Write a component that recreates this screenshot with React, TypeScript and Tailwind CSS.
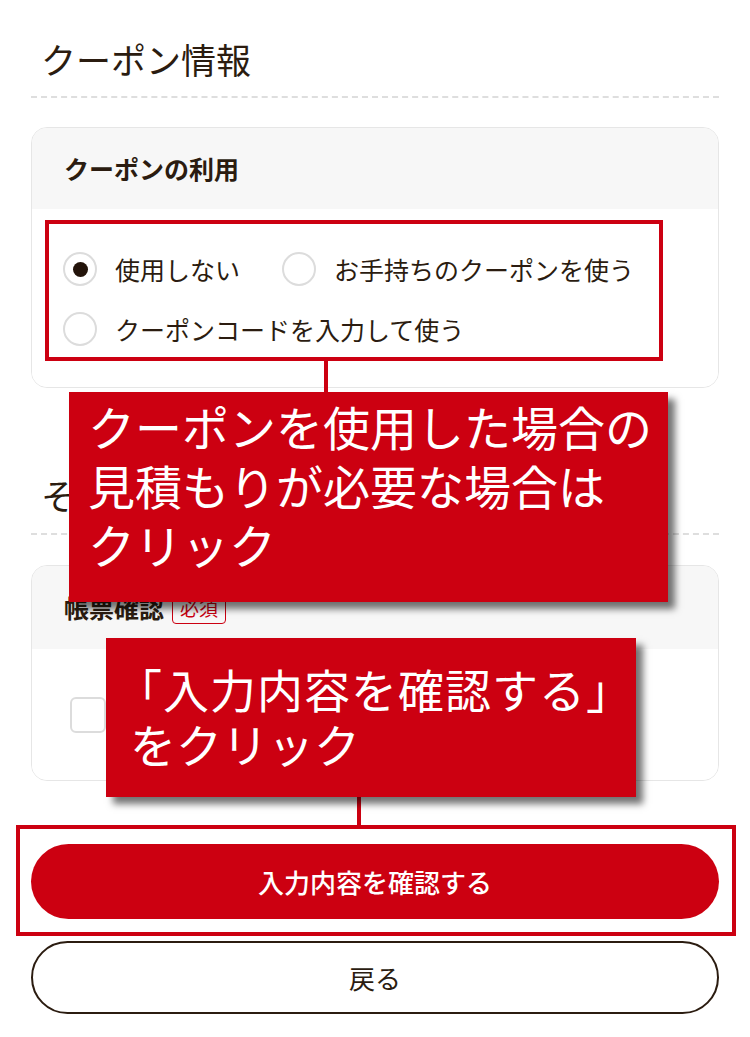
import React from "react";

function Radio({ checked, label }: { checked?: boolean; label: string }) {
  return (
    <label className="flex items-center gap-[18px]">
      <span className="flex h-[34px] w-[34px] shrink-0 items-center justify-center rounded-full border-2 border-[#dcdcdc] bg-white">
        {checked && <span className="h-[15px] w-[15px] rounded-full bg-[#23140a]" />}
      </span>
      <span className="text-[25px] leading-[32px] text-[#2b1c10]">{label}</span>
    </label>
  );
}

function Callout({ lines, className }: { lines: React.ReactNode[]; className: string }) {
  return (
    <div
      className={`absolute bg-[#cc0011] text-white shadow-[7px_7px_7px_rgba(0,0,0,0.55)] ${className}`}
    >
      {lines.map((l, i) => (
        <div key={i}>{l}</div>
      ))}
    </div>
  );
}

export default function App() {
  return (
    <div
      className="relative h-[1037px] w-[750px] overflow-hidden bg-white"
      style={{ fontFamily: '"Noto Sans CJK JP", "Noto Sans", sans-serif' }}
    >
      <div className="px-[31px]">
        {/* クーポン情報 */}
        <h2 className="pl-[10px] pt-[36px] text-[35px] leading-[46px] font-normal text-[#2b1c10]">
          クーポン情報
        </h2>
        <div className="mt-[14px] border-t-2 border-dashed border-[#dedede]" />

        <div className="mt-[29px] overflow-hidden rounded-[16px] border border-[#e6e6e6]">
          <div className="flex h-[81px] items-center bg-[#f7f7f7] px-[32px] text-[25px] font-bold text-[#2b1c10]">
            クーポンの利用
          </div>
          <div className="flex flex-col gap-[26px] bg-white px-[31px] pb-[41px] pt-[43px]">
            <div className="flex items-center gap-[42px]">
              <Radio checked label="使用しない" />
              <Radio label="お手持ちのクーポンを使う" />
            </div>
            <Radio label="クーポンコードを入力して使う" />
          </div>
        </div>

        {/* その他 */}
        <h2 className="mt-[84px] pl-[10px] text-[35px] leading-[46px] font-normal text-[#2b1c10]">
          その他
        </h2>
        <div className="mt-[15px] border-t-2 border-dashed border-[#dedede]" />

        <div className="mt-[30px] overflow-hidden rounded-[16px] border border-[#e6e6e6]">
          <div className="flex h-[83px] items-center gap-[8px] bg-[#f7f7f7] px-[32px]">
            <span className="text-[25px] font-bold text-[#2b1c10]">帳票確認</span>
            <span className="rounded-[4px] border-[1.5px] border-[#cc0011] px-[7px] text-[19px] leading-[30px] text-[#cc0011]">
              必須
            </span>
          </div>
          <div className="flex h-[131px] items-center gap-[16px] bg-white px-[38px]">
            <span className="h-[36px] w-[36px] shrink-0 rounded-[6px] border-2 border-[#dcdcdc]" />
            <span className="text-[25px] text-[#2b1c10]">見積書の内容を確認しました</span>
          </div>
        </div>

        <button
          type="button"
          className="mt-[63px] flex h-[75px] w-full items-center justify-center rounded-full bg-[#cc0011] text-[26px] font-medium text-white"
        >
          入力内容を確認する
        </button>
        <button
          type="button"
          className="mt-[22px] flex h-[73px] w-full items-center justify-center rounded-full border-2 border-[#2b1c10] bg-white text-[26px] text-[#2b1c10]"
        >
          戻る
        </button>
      </div>

      {/* annotations */}
      <div className="absolute left-[45px] top-[220px] h-[141px] w-[618px] border-4 border-[#cc0011]" />
      <div className="absolute left-[324px] top-[360px] h-[34px] w-[4px] bg-[#cc0011]" />
      <Callout
        className="left-[69px] top-[392px] h-[210px] w-[599px] pl-[19px] pt-[4px] text-[47px] leading-[59px]"
        lines={["クーポンを使用した場合の", "見積もりが必要な場合は", "クリック"]}
      />

      <div className="absolute left-[357px] top-[796px] h-[31px] w-[4px] bg-[#cc0011]" />
      <Callout
        className="left-[106px] top-[638px] h-[159px] w-[530px] pl-[24px] pt-[23px] text-[46px] leading-[55px]"
        lines={[
          <span className="ml-[-14px] tracking-[1px]">「入力内容を確認する」</span>,
          "をクリック",
        ]}
      />
      <div className="absolute left-[16px] top-[825px] h-[111px] w-[720px] border-4 border-[#cc0011]" />
    </div>
  );
}
